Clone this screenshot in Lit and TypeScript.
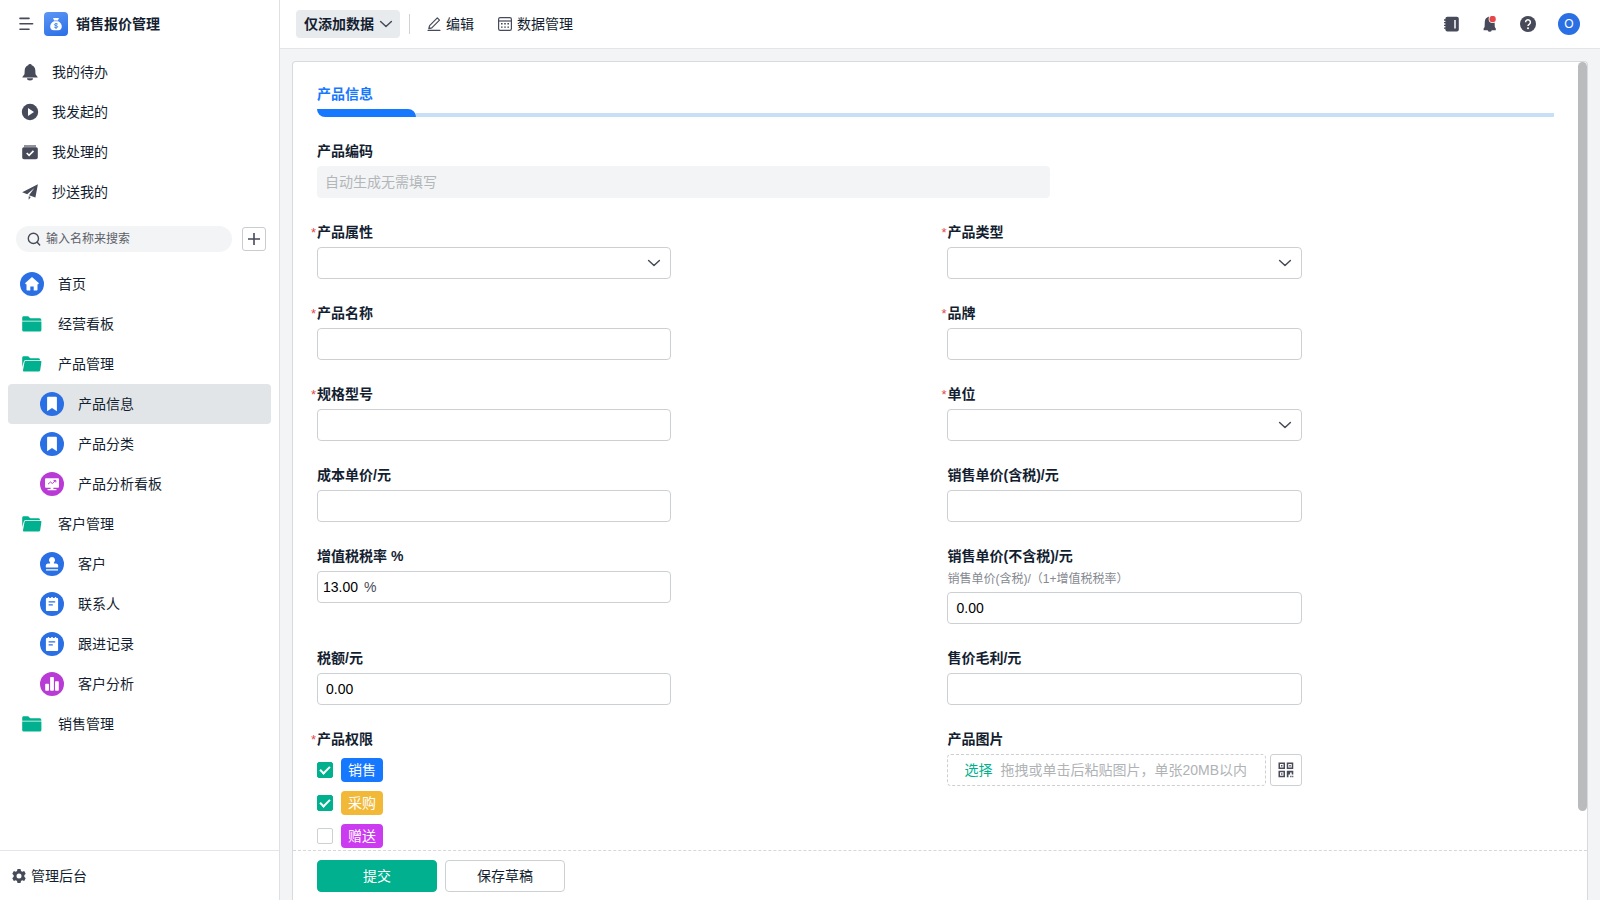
import { LitElement, html, css, svg, nothing } from "lit";
import { customElement, property } from "lit/decorators.js";
import { classMap } from "lit/directives/class-map.js";

const icons: Record<string, unknown> = {
  menu: svg`<g fill="none" stroke="currentColor" stroke-width="1.6" stroke-linecap="round"><path d="M2 2.400h9M2 7.800h12.600M2 13.200h9"/></g>`,
  bell: svg`<path d="M8 0a1.800 1.800 0 0 1 1.800 1.300c2.200.8 3.400 2.700 3.500 5l.2 4 2.100 2.600v.5H.4v-.5l2.100-2.600.2-4c.1-2.300 1.300-4.200 3.500-5A1.800 1.800 0 0 1 8 0z"/><path d="M5 14.300h6a3 2.200 0 0 1-6 0z"/>`,
  play: svg`<circle cx="8" cy="8" r="8.200"/><path d="M6 4.100l6 3.900-6 3.900z" fill="#fff"/>`,
  done: svg`<path d="M2 1h12v2.200H2z" opacity=".6"/><path d="M1.800 3.200h12.400A1.600 1.600 0 0 1 15.800 4.800v8.600a1.800 1.800 0 0 1-1.800 1.800H2a1.800 1.800 0 0 1-1.800-1.800V4.800a1.600 1.600 0 0 1 1.600-1.600z"/><path d="M4.700 9l2.400 2.400 4.400-4.500" fill="none" stroke="#fff" stroke-width="1.700"/>`,
  send: svg`<path d="M15.900.2L.2 8.200l5 2.100 7.200-6.200-5.400 7.200 6.400 2.300z"/><path d="M6.700 12.200v3.600l2-2.800z"/>`,
  search: svg`<g fill="none" stroke="currentColor" stroke-width="1.400" stroke-linecap="round"><circle cx="7.400" cy="7.400" r="5.100"/><path d="M11.200 11.200l2.500 2.800"/></g>`,
  plus: svg`<path d="M8 2v12M2 8h12" fill="none" stroke="currentColor" stroke-width="1.600"/>`,
  chevron: svg`<path d="M2.600 5.500L8 10.500l5.400-5" fill="none" stroke="currentColor" stroke-width="1.500" stroke-linecap="round" stroke-linejoin="round"/>`,
  pencil: svg`<g fill="none" stroke="currentColor" stroke-width="1.200" stroke-linejoin="round" stroke-linecap="round"><path d="M3.600 9.600l7.700-7.700 2.200 2.200-7.700 7.700-3 .8z"/><path d="M2 14.300h12"/></g>`,
  grid: svg`<rect x="1.600" y="1.600" width="12.800" height="12.800" rx="1.600" fill="none" stroke="currentColor" stroke-width="1.200"/><path d="M2 5h12" stroke="currentColor" stroke-width="1.200"/><path d="M4 7h1.600v1.400H4zM7.200 7h1.600v1.400H7.200zM10.400 7H12v1.400h-1.600zM4 10.400h1.600v1.400H4zM7.200 10.400h1.600v1.400H7.200zM10.400 10.400H12v1.400h-1.600z"/>`,
  book: svg`<rect x="1.400" y=".8" width="13.400" height="14.600" rx="2"/><path d="M0 4h3M0 6.700h3M0 9.400h3M0 12.100h3" stroke="currentColor" stroke-width="1.300"/><path d="M11 4v8.400" stroke="#fff" stroke-width="1.500"/>`,
  alert: svg`<path d="M7.600.8c3.200 0 4.900 2.300 5 5.200l.2 5 1 1.500v1.800H9.800a2.200 2.200 0 0 1-4.200 0H1.600v-1.800l1-1.500.2-5c.1-2.900 1.800-5.200 4.800-5.200z"/><circle cx="10.600" cy="3" r="4" fill="#fff"/><circle cx="10.600" cy="3" r="3.200" fill="#e5474b"/>`,
  help: svg`<circle cx="8" cy="8" r="8"/><path d="M5.600 6.200a2.400 2.400 0 1 1 3.800 2c-.9.600-1.400 1-1.400 1.900" fill="none" stroke="#fff" stroke-width="1.500"/><circle cx="8" cy="12.200" r="1" fill="#fff"/>`,
  gear: svg`<path fill-rule="evenodd" d="M6.500 1h3l.5 2 1.200.7 2-.6 1.500 2.600L13.300 7.200v1.600l1.400 1.500-1.500 2.600-2-.6-1.200.7-.5 2h-3l-.5-2-1.200-.7-2 .6-1.500-2.600 1.400-1.500V7.200L1.300 5.700l1.500-2.600 2 .6L6 3zM8 5.500a2.500 2.500 0 1 0 0 5 2.500 2.500 0 0 0 0-5z"/>`,
  qr: svg`<g fill="none" stroke="currentColor" stroke-width="1.500"><path d="M1.250 1.250h5v5h-5zM9.500 1.250h5v5h-5zM1.250 9.500h5v5h-5z"/></g><path d="M3.050 3.050h1.400v1.400h-1.400zM11.300 3.050h1.400v1.400h-1.400zM3.050 11.300h1.400v1.400h-1.400zM8.800 8.800h6.500v3.700h-1.600v-2h-1.600v2h-1.600v2.800H8.800zM12.200 13.700h1.300v1.600h-1.300zM14.200 13.700h1.100v1.600h-1.100z"/>`,
  folder: svg`<path d="M.2 1.700A1.500 1.500 0 0 1 1.700.3h4.500l2 1.900h9.600a1.500 1.500 0 0 1 1.500 1.500v1.100H.2z"/><path d="M.2 5.500h19.200v8.400a1.500 1.500 0 0 1-1.500 1.500H1.700a1.500 1.500 0 0 1-1.500-1.500z"/>`,
  folderOpen: svg`<path d="M.2 1.700A1.500 1.500 0 0 1 1.700.3h4.500l2 1.900h8.400A1.500 1.500 0 0 1 18 3.700v.5H3.300a1.500 1.500 0 0 0-1.400 1.100L.2 11z"/><path d="M3.600 5h15a.8.800 0 0 1 .8.900l-1.200 8.300a1.500 1.500 0 0 1-1.500 1.200H2A1 1 0 0 1 1 14.200L2.500 5.900a1 1 0 0 1 1.100-.9z"/>`,
  home: svg`<path d="M12 5l7 6.200-.8 1H17.500v5.600a.8.800 0 0 1-.8.800h-3v-4h-3.400v4h-3a.8.800 0 0 1-.8-.8v-5.600h-.700l-.8-1z"/>`,
  bookmark: svg`<path d="M8 4.800h8a.9.900 0 0 1 .9.900V19.300L12 15.900l-4.900 3.400V5.700A.9.900 0 0 1 8 4.800z"/>`,
  monitor: svg`<path d="M6 6.200h12a1 1 0 0 1 1 1v7.600a1 1 0 0 1-1 1h-4.600v1.200h3v1.200H7.600V17h3v-1.200H6a1 1 0 0 1-1-1V7.200a1 1 0 0 1 1-1z"/><path d="M8 12.200l2.500-2.200 1.800 1.500 3.200-3M13.500 8.400h2.300v2" fill="none" stroke="#b93bd6" stroke-width="1"/>`,
  stamp: svg`<path d="M12 5a3.100 3.100 0 0 1 2 5.400c-.3.500-.2 1 .4 1h1.800a2.200 2.200 0 0 1 2 2.200v2H5.800v-2a2.200 2.200 0 0 1 2-2.200h1.800c.6 0 .7-.500.400-1A3.100 3.100 0 0 1 12 5z"/><path d="M6 17h12v1.700H6z" opacity=".75"/>`,
  note: svg`<path d="M6.800 6h1V5h1.400v1h2V5h1.600v1h2V5h1.400v1h1a.9.900 0 0 1 .9.900V18a.9.900 0 0 1-.9.900H6.800a.9.900 0 0 1-.9-.9V6.900a.9.900 0 0 1 .9-.9z"/><path d="M8.600 9.800h6.600M8.600 12.800h4.200" stroke="#2a6fe3" stroke-width="1.200"/>`,
  bars: svg`<rect x="5.200" y="11.800" width="3.800" height="7" rx=".8"/><rect x="10.100" y="5" width="3.800" height="13.800" rx=".8"/><rect x="15" y="9.200" width="3.800" height="9.600" rx=".8"/>`,
  bag: svg`<path d="M9 6h6l-1.100 2.600h-3.800zM9.800 9.200h4.400c2.200 1.200 3.600 3.300 3.600 5.300 0 2.200-1.300 3.700-3.600 3.700H9.800c-2.300 0-3.600-1.500-3.600-3.700 0-2 1.400-4.100 3.600-5.300z"/><path d="M13.800 12.200c-.9-.9-3.400-.8-3.400.5 0 1.400 3.300.6 3.300 2 0 1.300-2.700 1.300-3.500.4M12 11v6" fill="none" stroke="#3f7fec" stroke-width=".9"/>`,
};

const icon = (name: string, w = 16, h = 16, cls = "") =>
  html`<svg class=${cls} width=${w} height=${h} viewBox="0 0 ${w} ${h}" fill="currentColor" aria-hidden="true">${icons[name]}</svg>`;

const base = css`
  * { box-sizing: border-box; }
  svg { display: block; flex: none; }
  button, input, select { font: inherit; color: inherit; margin: 0; }
  button { cursor: pointer; padding: 0; border: 0; background: none; }
  a { color: inherit; text-decoration: none; }
`;

@customElement("side-nav")
class SideNav extends LitElement {
  static styles = [base, css`
    :host { display: flex; flex-direction: column; width: 280px; flex: none; background: #fff; border-right: 1px solid #dee0e3; }
    .brand { display: flex; align-items: center; height: 48px; padding: 0 16px; font-weight: 600; }
    .menu { color: #474a59; padding: 2px; margin-right: 8px; }
    .logo { display: flex; width: 24px; height: 24px; border-radius: 4px; color: #fff; background: linear-gradient(160deg, #5d97f6, #2a6de6); margin-right: 8px; }
    .quick { padding: 4px 8px 0; }
    .item { display: flex; align-items: center; height: 40px; border-radius: 4px; padding-left: 12px; gap: 14px; }
    .quick .item { padding-left: 14px; }
    .quick svg { color: #474a59; overflow: visible; }
    .find { display: flex; align-items: center; gap: 10px; padding: 14px 13px 12px 16px; }
    .search { flex: 1; display: flex; align-items: center; gap: 4px; height: 26px; border-radius: 13px; background: #f2f4f5; padding: 0 10px; color: #474a59; font-size: 12px; }
    .search input { flex: 1; min-width: 0; border: 0; background: none; outline: 0; padding: 0; }
    .search input::placeholder { color: #5c5f69; opacity: 1; }
    .add { display: grid; place-items: center; width: 24px; height: 24px; border: 1px solid #c9ccd1; border-radius: 3px; color: #474a59; }
    .tree { flex: 1; padding: 0 8px; overflow: hidden; }
    .sub { padding-left: 32px; }
    .active { background: #e1e5e8; }
    .disc { display: flex; width: 24px; height: 24px; border-radius: 50%; color: #fff; background: #2a6fe3; }
    .purple { background: #b93bd6; }
    .folder { display: grid; place-items: center; width: 24px; height: 24px; color: #00b08e; }
    .foot { display: flex; align-items: center; height: 50px; padding: 0 11px; gap: 4px; border-top: 1px solid #e3e5e8; }
    .foot svg { color: #474a59; }
  `];
  render() {
    const quick = [["bell", "我的待办"], ["play", "我发起的"], ["done", "我处理的"], ["send", "抄送我的"]];
    const tree: [string, string, string][] = [
      ["home", "首页", ""], ["folder", "经营看板", ""], ["folderOpen", "产品管理", ""],
      ["bookmark", "产品信息", "sub active"], ["bookmark", "产品分类", "sub"], ["monitor", "产品分析看板", "sub"],
      ["folderOpen", "客户管理", ""], ["stamp", "客户", "sub"], ["note", "联系人", "sub"], ["note", "跟进记录", "sub"],
      ["bars", "客户分析", "sub"], ["folder", "销售管理", ""],
    ];
    return html`
      <div class="brand">
        <button class="menu" aria-label="菜单">${icon("menu")}</button>
        <span class="logo">${icon("bag", 24, 24)}</span>销售报价管理
      </div>
      <nav class="quick">${quick.map(([i, t]) => html`<a class="item" href="#">${icon(i)}<span>${t}</span></a>`)}</nav>
      <div class="find">
        <label class="search">${icon("search")}<input type="text" aria-label="搜索" placeholder="输入名称来搜索"></label>
        <button class="add" aria-label="新建">${icon("plus")}</button>
      </div>
      <nav class="tree">${tree.map(([i, t, c]) => html`<a class="item ${c}" href="#">
        ${i.startsWith("folder")
          ? html`<span class="folder">${icon(i, 20, 16)}</span>`
          : html`<span class=${classMap({ disc: true, purple: i === "monitor" || i === "bars" })}>${icon(i, 24, 24)}</span>`}
        <span>${t}</span></a>`)}</nav>
      <a class="foot" href="#">${icon("gear")}<span>管理后台</span></a>`;
  }
}

@customElement("top-bar")
class TopBar extends LitElement {
  static styles = [base, css`
    :host { display: flex; align-items: center; height: 49px; padding: 0 20px 0 16px; background: #fff; border-bottom: 1px solid #e3e5e8; }
    .mode { display: flex; align-items: center; gap: 4px; height: 28px; padding: 0 6px 0 8px; border-radius: 4px; background: #e8ebee; font-weight: 600; }
    .rule { width: 1px; height: 20px; background: #d0d3d6; margin: 0 16px 0 9px; }
    .tool { display: flex; align-items: center; gap: 4px; margin-right: 23px; }
    svg { color: #474a59; }
    .right { display: flex; align-items: center; gap: 22px; margin-left: auto; }
    .avatar { width: 22px; height: 22px; border-radius: 50%; background: #2a6fe3; color: #fff; font-size: 12px; line-height: 22px; }
  `];
  render() {
    return html`
      <button class="mode">仅添加数据${icon("chevron")}</button>
      <span class="rule"></span>
      <button class="tool">${icon("pencil")}编辑</button>
      <button class="tool">${icon("grid")}数据管理</button>
      <div class="right">
        <button aria-label="通讯录">${icon("book")}</button>
        <button aria-label="通知">${icon("alert")}</button>
        <button aria-label="帮助">${icon("help")}</button>
        <button class="avatar">O</button>
      </div>`;
  }
}

@customElement("form-field")
class FormField extends LitElement {
  @property() label = "";
  @property() kind = "text";
  @property() value = "";
  @property() hint = "";
  @property() suffix = "";
  @property({ type: Boolean }) required = false;
  static styles = [base, css`
    :host { display: block; min-width: 0; }
    .label { display: block; width: fit-content; position: relative; line-height: 21px; font-weight: 600; }
    .star { position: absolute; right: 100%; top: 0; padding-right: 1px; color: #e5474b; font-weight: 400; font-size: 13px; }
    .hint { margin-top: 4px; font-size: 12px; line-height: 17px; color: #858990; }
    .box { display: flex; align-items: center; position: relative; height: 32px; margin-top: 4px; border: 1px solid #cdd0d3; border-radius: 4px; background: #fff; color: #000; }
    .box input, .box select { flex: 1; width: 100%; min-width: 0; height: 30px; border: 0; outline: 0; background: none; padding: 0 8px; appearance: none; }
    .box .num { flex: none; width: auto; field-sizing: content; padding: 0 6px 0 5px; }
    .suffix { color: #474a59; }
    .arrow { position: absolute; right: 8px; color: #474a59; pointer-events: none; }
    .auto { border-color: #f2f4f5; background: #f2f4f5; }
    .auto input { padding: 0 7px; }
    .auto input::placeholder { color: #b3b6b9; opacity: 1; }
    .upload { display: flex; gap: 4px; margin-top: 4px; }
    .drop { flex: 1; min-width: 0; display: flex; align-items: center; gap: 8px; height: 32px; padding: 0 16px; border: 1px dashed #cdd0d3; border-radius: 4px; color: #b0b3b6; white-space: nowrap; overflow: hidden; }
    .pick { color: #00b08e; }
    .qr { display: grid; place-items: center; width: 32px; height: 32px; border: 1px solid #cdd0d3; border-radius: 3px; color: #474a59; }
    .options { display: grid; gap: 1px; padding-top: 4px; }
    .option { display: flex; align-items: center; gap: 8px; width: fit-content; height: 32px; }
    .option input { appearance: none; display: grid; place-items: center; width: 16px; height: 16px; border: 1px solid #cdd0d3; border-radius: 2px; background: #fff; }
    .option input:checked { background: #00b08e; border-color: #00b08e; }
    .option input:checked::after { content: ""; box-sizing: border-box; width: 10px; height: 6px; border: solid #fff; border-width: 0 0 2px 2px; transform: translateY(-1px) rotate(-45deg); }
    .tag { height: 24px; line-height: 24px; padding: 0 7px; border-radius: 4px; color: #fff; }
    .blue { background: #1677ff; }
    .amber { background: #f2b938; }
    .violet { background: #cb3bf0; }
  `];
  control() {
    if (this.kind === "select") return html`<div class="box"><select id="c"><option></option></select>${icon("chevron", 16, 16, "arrow")}</div>`;
    if (this.kind === "auto") return html`<div class="box auto"><input id="c" disabled placeholder="自动生成无需填写"></div>`;
    if (this.kind === "upload") return html`<div class="upload">
      <div class="drop"><button id="c" type="button" class="pick">选择</button><span>拖拽或单击后粘贴图片，单张20MB以内</span></div>
      <button class="qr" type="button" aria-label="扫码上传">${icon("qr")}</button></div>`;
    if (this.kind === "checks") return html`<div class="options" role="group" aria-labelledby="l">
      ${[["销售", "blue", true], ["采购", "amber", true], ["赠送", "violet", false]].map(([t, c, on]) => html`
        <label class="option"><input type="checkbox" ?checked=${on}><span class="tag ${c}">${t}</span></label>`)}</div>`;
    return html`<div class="box"><input id="c" class=${this.suffix ? "num" : ""} type="text" .value=${this.value}>
      ${this.suffix ? html`<span class="suffix">${this.suffix}</span>` : nothing}</div>`;
  }
  render() {
    const star = this.required ? html`<span class="star">*</span>` : nothing;
    return html`
      ${this.kind === "checks"
        ? html`<div id="l" class="label">${star}${this.label}</div>`
        : html`<label class="label" for="c">${star}${this.label}</label>`}
      ${this.hint ? html`<div class="hint">${this.hint}</div>` : nothing}
      ${this.control()}`;
  }
}

@customElement("app-root")
class AppRoot extends LitElement {
  static styles = [base, css`
    :host { display: flex; height: 100vh; background: #f2f4f6; color: #141e31; font: 14px/20px "Liberation Sans", "Noto Sans CJK SC", sans-serif; }
    .main { flex: 1; min-width: 0; display: flex; flex-direction: column; }
    .card { flex: 1; min-height: 0; display: flex; flex-direction: column; margin: 12px 12px 0; border: 1px solid #d8dade; border-bottom: 0; border-radius: 4px 4px 0 0; background: #fff; }
    .pane { flex: 1; min-height: 0; display: flex; position: relative; }
    .scroll { flex: 1; min-width: 0; overflow: auto; scrollbar-width: none; padding: 22px 33px 24px 24px; }
    .thumb { position: absolute; top: 0; right: 0; width: 9px; height: 95%; border-radius: 5px; background: #b9bbbd; }
    .title { margin: 0; font-size: 14px; line-height: 21px; font-weight: 600; color: #1677ff; }
    .bar { display: flex; align-items: flex-end; height: 8px; margin: 4px 0 24px; }
    .lead { width: 99px; height: 8px; background: #1677ff; border-radius: 0 8px 0 8px; }
    .line { flex: 1; height: 4px; background: #c8dff8; }
    .fields { display: grid; grid-template-columns: repeat(10, minmax(0, 1fr)); gap: 24px; }
    .wide { grid-column: 1 / span 6; }
    .left { grid-column: 1 / span 3; }
    .right { grid-column: 6 / span 3; }
    .actions { display: flex; gap: 8px; padding: 9px 24px 8px; border-top: 1px dashed #d5d7da; }
    .btn { width: 120px; height: 32px; border: 1px solid #cdd0d3; border-radius: 4px; background: #fff; }
    .primary { border-color: #00b08e; background: #00b08e; color: #fff; }
  `];
  render() {
    return html`
      <side-nav></side-nav>
      <div class="main">
        <top-bar></top-bar>
        <form class="card" @submit=${(e: Event) => e.preventDefault()}>
          <div class="pane">
            <div class="scroll">
              <h2 class="title">产品信息</h2>
              <div class="bar"><span class="lead"></span><span class="line"></span></div>
              <div class="fields">
                <form-field class="wide" label="产品编码" kind="auto"></form-field>
                <form-field class="left" label="产品属性" kind="select" required></form-field>
                <form-field class="right" label="产品类型" kind="select" required></form-field>
                <form-field class="left" label="产品名称" required></form-field>
                <form-field class="right" label="品牌" required></form-field>
                <form-field class="left" label="规格型号" required></form-field>
                <form-field class="right" label="单位" kind="select" required></form-field>
                <form-field class="left" label="成本单价/元"></form-field>
                <form-field class="right" label="销售单价(含税)/元"></form-field>
                <form-field class="left" label="增值税税率 %" value="13.00" suffix="%"></form-field>
                <form-field class="right" label="销售单价(不含税)/元" hint="销售单价(含税)/（1+增值税税率）" value="0.00"></form-field>
                <form-field class="left" label="税额/元" value="0.00"></form-field>
                <form-field class="right" label="售价毛利/元"></form-field>
                <form-field class="left" label="产品权限" kind="checks" required></form-field>
                <form-field class="right" label="产品图片" kind="upload"></form-field>
              </div>
            </div>
            <div class="thumb"></div>
          </div>
          <div class="actions">
            <button class="btn primary" type="submit">提交</button>
            <button class="btn" type="button">保存草稿</button>
          </div>
        </form>
      </div>`;
  }
}
